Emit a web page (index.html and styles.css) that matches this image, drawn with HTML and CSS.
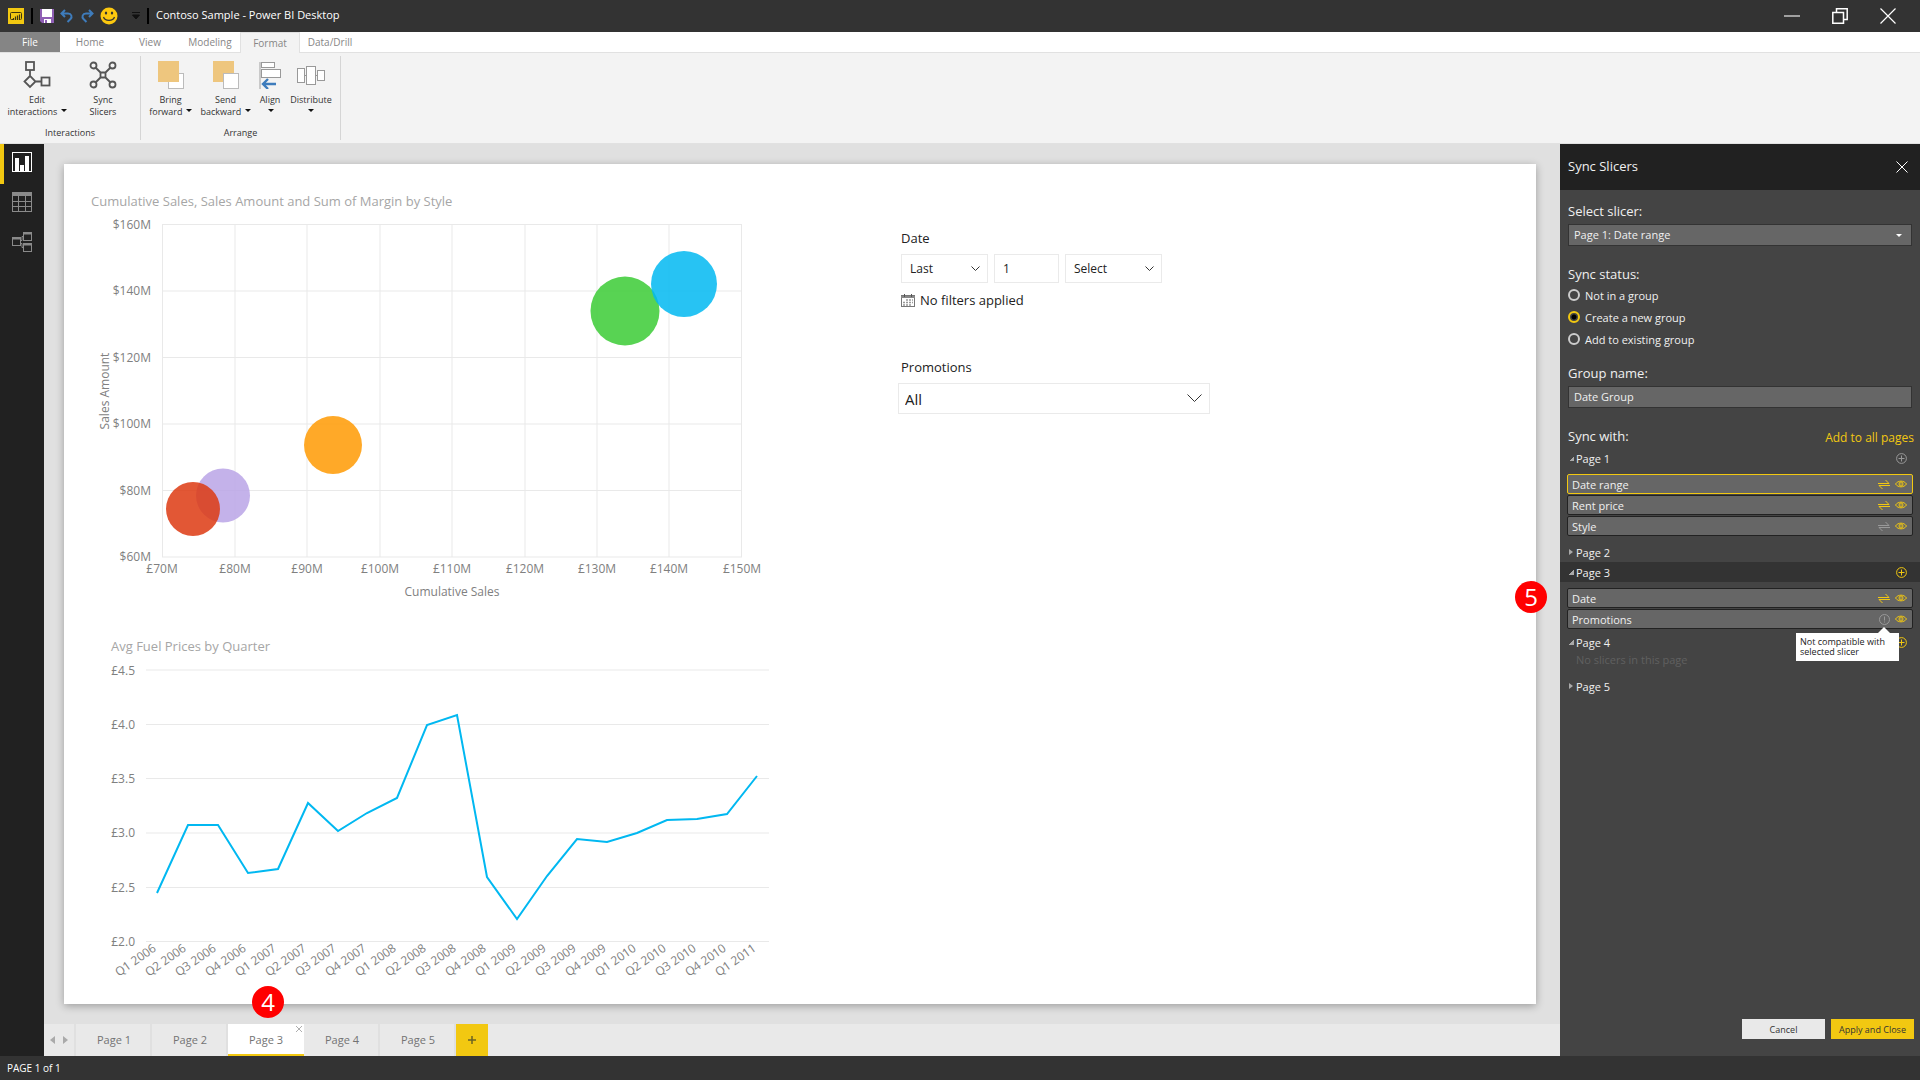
FILE: index.html
```
<!DOCTYPE html>
<html lang="en">
<head>
  <meta charset="UTF-8">
  <meta name="viewport" content="width=device-width, initial-scale=1.0">
  <title>Contoso Sample - Power BI Desktop</title>
  <link rel="stylesheet" href="styles.css">
</head>
<body>

  <!-- Shared icons -->
  <svg class="sprite" aria-hidden="true">
    <symbol id="icon-sync" viewBox="0 0 12 11"><path d="M0 4.500H11L7.500 1M12 6.500H1L4.500 10" fill="none" stroke="currentColor" stroke-width="1"/></symbol>
    <symbol id="icon-eye" viewBox="0 0 12 8"><path d="M0.5 4C3 0.2 9 0.2 11.5 4C9 7.8 3 7.8 0.5 4Z" fill="none" stroke="currentColor" stroke-width="1"/><circle cx="6" cy="4" r="2" fill="none" stroke="currentColor" stroke-width="1"/><circle cx="6" cy="4" r="0.7" fill="currentColor"/></symbol>
    <symbol id="icon-add" viewBox="0 0 11 11"><path d="M5.5 2.5V8.500M2.500 5.500H8.500" stroke="currentColor"/><circle cx="5.500" cy="5.500" r="4.900" fill="none" stroke="currentColor"/></symbol>
    <symbol id="icon-warn" viewBox="0 0 11 11"><path d="M5.500 2.500V6.500M5.500 7.500V8.500" stroke="currentColor"/><circle cx="5.500" cy="5.500" r="5" fill="none" stroke="currentColor"/></symbol>
  </svg>

  <!-- Title bar -->
  <header class="titlebar">
    <svg class="app-logo" width="16" height="16" viewBox="0 0 16 16"><rect width="16" height="16" fill="#f2c811"/><path d="M5 11.500H3.500Q2.500 11.500 2.500 10.500V5.500Q2.500 4.500 3.500 4.500H12.500Q13.500 4.500 13.500 5.500V10.500Q13.500 11.500 12.500 11.500" fill="none" stroke="#3d3510"/><path d="M5.500 12V10M7.500 12V8.500M9.500 12V7.500M11.500 12V6.500" stroke="#3d3510" stroke-width="1.200"/></svg>
    <span class="bar"></span>
    <button class="quick" aria-label="Save"><svg width="14" height="14" viewBox="0 0 14 14"><path d="M0 0H14V14H2L0 12Z" fill="#8f5fb5"/><rect x="2" width="10" height="8" fill="#fff"/><rect x="4" y="10" width="7" height="4" fill="#fff"/><rect x="5" y="11" width="2" height="3" fill="#8f5fb5"/></svg></button>
    <button class="quick" aria-label="Undo"><svg width="14" height="14" viewBox="0 0 14 14"><path d="M5 1L1.500 4.500L5 8M1.500 4.500H8C11.500 4.500 12.500 8 10.500 10L7.500 13" fill="none" stroke="#3e7cbc" stroke-width="2"/></svg></button>
    <button class="quick" aria-label="Redo"><svg width="14" height="14" viewBox="0 0 14 14"><path d="M9 1L12.500 4.500L9 8M12.500 4.500H6C2.500 4.500 1.500 8 3.500 10L6.500 13" fill="none" stroke="#3e7cbc" stroke-width="2"/></svg></button>
    <button class="quick" aria-label="Send a smile"><svg width="18" height="18" viewBox="0 0 18 18"><circle cx="9" cy="9" r="8.500" fill="#fcc80f"/><ellipse cx="6" cy="6" rx="1.200" ry="1.600" fill="#333"/><ellipse cx="12" cy="6" rx="1.200" ry="1.600" fill="#333"/><path d="M3.500 10C5 14.500 13 14.500 14.500 10" fill="none" stroke="#333" stroke-width="1.200"/></svg></button>
    <button class="quick more" aria-label="Customize toolbar"><svg width="8" height="8" viewBox="0 0 8 8"><path d="M0 0.500H8M0.500 3H7.500L4 7Z" stroke="#111" fill="#111"/></svg></button>
    <span class="bar"></span>
    <span class="window-title">Contoso Sample - Power BI Desktop</span>
    <div class="window-controls">
      <button aria-label="Minimize"><svg width="16" height="16" viewBox="0 0 16 16"><path d="M0 8H16" stroke="#a0a0a0" stroke-width="2"/></svg></button>
      <button aria-label="Restore"><svg width="16" height="16" viewBox="0 0 16 16"><path d="M0.800 4.500H11.500V15.200H0.800ZM4.500 4V0.800H15.200V11.500H12" fill="none" stroke="#fff" stroke-width="1.500"/></svg></button>
      <button aria-label="Close window"><svg width="16" height="16" viewBox="0 0 16 16"><path d="M0.500 0.500L15.500 15.500M15.500 0.500L0.500 15.500" stroke="#fff" stroke-width="1.200"/></svg></button>
    </div>
  </header>

  <!-- Ribbon -->
  <nav class="ribbon-tabs">
    <button class="file">File</button>
    <button>Home</button>
    <button>View</button>
    <button>Modeling</button>
    <button class="active">Format</button>
    <button>Data/Drill</button>
  </nav>
  <div class="ribbon">
    <section class="ribbon-group interactions">
      <div class="tools">
        <button class="tool">
          <svg width="28" height="28" viewBox="0 0 28 28" fill="none" stroke="#555" stroke-width="1.800"><rect x="3" y="1" width="8" height="8"/><path d="M7 9V15L12.500 20.500L7 26L1.500 20.500L7 15M12.500 20.500H19"/><rect x="18.500" y="16.500" width="8" height="8"/></svg>
          <span>Edit<br>interactions <i class="caret"></i></span>
        </button>
        <button class="tool">
          <svg width="28" height="28" viewBox="0 0 28 28" fill="none" stroke="#555" stroke-width="1.800"><circle cx="4.500" cy="4.500" r="3"/><circle cx="23.500" cy="4.500" r="3"/><circle cx="4.500" cy="23.500" r="3"/><circle cx="23.500" cy="23.500" r="3"/><rect x="11.500" y="11.500" width="5" height="5" rx="1"/><path d="M6.500 6.500L11.500 11.500M21.500 6.500L16.500 11.500M6.500 21.500L11.500 16.500M21.500 21.500L16.500 16.500"/></svg>
          <span>Sync<br>Slicers</span>
        </button>
      </div>
      <h2>Interactions</h2>
    </section>
    <section class="ribbon-group arrange">
      <div class="tools">
        <button class="tool">
          <svg width="28" height="28" viewBox="0 0 28 28"><rect x="11.500" y="12.500" width="15" height="15" fill="#fff" stroke="#bbb"/><rect x="1" width="21" height="21" fill="#eec67e"/></svg>
          <span>Bring<br>forward <i class="caret"></i></span>
        </button>
        <button class="tool">
          <svg width="28" height="28" viewBox="0 0 28 28"><rect x="1" width="21" height="21" fill="#eec67e"/><rect x="11.500" y="12.500" width="15" height="15" fill="#fff" stroke="#bbb"/></svg>
          <span>Send<br>backward <i class="caret"></i></span>
        </button>
        <button class="tool narrow">
          <svg width="28" height="28" viewBox="0 0 28 28"><path d="M4 1V28" stroke="#bbb" stroke-width="1.500"/><g fill="#fff" stroke="#999"><rect x="5.500" y="1.500" width="13" height="5"/><rect x="5.500" y="8.500" width="19" height="8"/></g><path d="M20 23H7M12 18L7 23L12 28" fill="none" stroke="#3e7cbc" stroke-width="2.400"/></svg>
          <span>Align<br><i class="caret"></i></span>
        </button>
        <button class="tool medium">
          <svg width="28" height="28" viewBox="0 0 28 28" fill="#fff" stroke="#999"><path d="M7 14.500H10M18 14.500H21"/><rect x="0.500" y="7.500" width="7" height="14"/><rect x="9.500" y="5.500" width="9" height="18"/><rect x="20.500" y="9.500" width="7" height="10"/></svg>
          <span>Distribute<br><i class="caret"></i></span>
        </button>
      </div>
      <h2>Arrange</h2>
    </section>
  </div>

  <main class="workspace">
    <!-- View switcher -->
    <nav class="rail">
      <button class="active" aria-label="Report view"><svg width="20" height="20" viewBox="0 0 20 20"><rect x="0.500" y="0.500" width="19" height="19" fill="none" stroke="#fff"/><path d="M3 20V6H7V20ZM8 20V13H12V20ZM13 20V4H17V20Z" fill="#fff"/></svg></button>
      <button aria-label="Data view"><svg width="20" height="20" viewBox="0 0 20 20" fill="none" stroke="#8a8a8a"><rect x="0.500" y="0.500" width="19" height="19"/><path d="M0 2H20" stroke-width="4"/><path d="M0 9.500H20M0 14.500H20M6.500 4V20M13.500 4V20"/></svg></button>
      <button aria-label="Model view"><svg width="20" height="20" viewBox="0 0 20 20" fill="none" stroke="#8a8a8a"><rect x="0.500" y="5.500" width="8" height="8"/><rect x="11.500" y="0.500" width="8" height="8"/><rect x="11.500" y="11.500" width="8" height="8"/><path d="M0 6.500H9M11 1.500H20M11 12.500H20" stroke-width="2"/><path d="M9 8.500H10V4.500H11M9 11.500H10V15.500H11"/></svg></button>
    </nav>

    <div class="report">
      <div class="canvas">
        <div class="sheet">
          <div class="charts">
            <section class="chart">
              <h3>Cumulative Sales, Sales Amount and Sum of Margin by Style</h3>
              <svg width="680" height="400" viewBox="0 0 680 400">
                <path class="grid" d="M71.500 12V345M144 12V345M216 12V345M289 12V345M361 12V345M434 12V345M506 12V345M578 12V345M650.500 12V345M71 12.500H651M71 79H651M71 145.500H651M71 212H651M71 278.500H651M71 345H651"/>
                <g class="axis end">
                  <text x="60" y="17">$160M</text>
                  <text x="60" y="83">$140M</text>
                  <text x="60" y="150">$120M</text>
                  <text x="60" y="216">$100M</text>
                  <text x="60" y="283">$80M</text>
                  <text x="60" y="349">$60M</text>
                </g>
                <g class="axis middle">
                  <text x="71" y="361">£70M</text>
                  <text x="144" y="361">£80M</text>
                  <text x="216" y="361">£90M</text>
                  <text x="289" y="361">£100M</text>
                  <text x="361" y="361">£110M</text>
                  <text x="434" y="361">£120M</text>
                  <text x="506" y="361">£130M</text>
                  <text x="578" y="361">£140M</text>
                  <text x="651" y="361">£150M</text>
                  <text x="361" y="384">Cumulative Sales</text>
                  <text transform="translate(18 179) rotate(-90)">Sales Amount</text>
                </g>
                <g class="bubbles">
                  <circle cx="534" cy="99" r="34.500" fill="#3bcb35"/>
                  <circle cx="593" cy="72" r="33" fill="#01b8f1"/>
                  <circle cx="242" cy="233" r="29" fill="#ff9a02"/>
                  <circle cx="132" cy="283.500" r="27" fill="#baa5e6"/>
                  <circle cx="102" cy="297" r="27" fill="#dd3a12"/>
                </g>
              </svg>
            </section>
            <section class="chart fuel">
              <h3>Avg Fuel Prices by Quarter</h3>
              <svg width="680" height="315" viewBox="0 0 680 315">
                <path class="grid" d="M35 10H658M35 64.500H658M35 118.500H658M35 173H658M35 227.500H658M35 281.500H658"/>
                <g class="axis end">
                  <text x="24" y="15">£4.5</text>
                  <text x="24" y="69">£4.0</text>
                  <text x="24" y="123">£3.5</text>
                  <text x="24" y="177">£3.0</text>
                  <text x="24" y="232">£2.5</text>
                  <text x="24" y="286">£2.0</text>
                </g>
                <polyline class="line" points="46,233 77,165 107,165 137,213 167,209 197,143 227,171 256,153 286,138 316,65 346,55 376,217 406,259 436,216 466,179 496,182 526,173 556,160 586,159 616,154 646,116"/>
                <g class="axis end">
                  <text transform="translate(46 290) rotate(-35)">Q1 2006</text>
                  <text transform="translate(76 290) rotate(-35)">Q2 2006</text>
                  <text transform="translate(106 290) rotate(-35)">Q3 2006</text>
                  <text transform="translate(136 290) rotate(-35)">Q4 2006</text>
                  <text transform="translate(166 290) rotate(-35)">Q1 2007</text>
                  <text transform="translate(196 290) rotate(-35)">Q2 2007</text>
                  <text transform="translate(226 290) rotate(-35)">Q3 2007</text>
                  <text transform="translate(256 290) rotate(-35)">Q4 2007</text>
                  <text transform="translate(286 290) rotate(-35)">Q1 2008</text>
                  <text transform="translate(316 290) rotate(-35)">Q2 2008</text>
                  <text transform="translate(346 290) rotate(-35)">Q3 2008</text>
                  <text transform="translate(376 290) rotate(-35)">Q4 2008</text>
                  <text transform="translate(406 290) rotate(-35)">Q1 2009</text>
                  <text transform="translate(436 290) rotate(-35)">Q2 2009</text>
                  <text transform="translate(466 290) rotate(-35)">Q3 2009</text>
                  <text transform="translate(496 290) rotate(-35)">Q4 2009</text>
                  <text transform="translate(526 290) rotate(-35)">Q1 2010</text>
                  <text transform="translate(556 290) rotate(-35)">Q2 2010</text>
                  <text transform="translate(586 290) rotate(-35)">Q3 2010</text>
                  <text transform="translate(616 290) rotate(-35)">Q4 2010</text>
                  <text transform="translate(646 290) rotate(-35)">Q1 2011</text>
                </g>
              </svg>
            </section>
          </div>

          <div class="slicers">
            <section class="slicer">
              <h3>Date</h3>
              <div class="date-row">
                <select class="period" aria-label="Date direction"><option>Last</option><option>Next</option></select>
                <input type="text" class="count" value="1" aria-label="Count">
                <select class="unit" aria-label="Date unit"><option>Select</option><option>Days</option></select>
              </div>
              <p class="applied">
                <svg width="14" height="13" viewBox="0 0 14 13"><rect x="0.500" y="1.500" width="13" height="11" fill="#fff" stroke="#777"/><path d="M0 3H14" stroke="#888" stroke-width="2"/><path d="M3.500 0V3M10.500 0V3" stroke="#555"/><path d="M5 6H12M2 8.500H12M2 11H10" stroke="#999" stroke-width="1.500" stroke-dasharray="2 1"/></svg>
                No filters applied
              </p>
            </section>
            <section class="slicer">
              <h3><label for="promotions">Promotions</label></h3>
              <select id="promotions" class="promotions"><option>All</option></select>
            </section>
          </div>
          <span class="callout step-five">5</span>
        </div>
      </div>

      <!-- Page tabs -->
      <nav class="page-tabs">
        <div class="pager">
          <button aria-label="Previous page"><svg width="5" height="8" viewBox="0 0 5 8"><path d="M5 0V8L0 4Z" fill="#aaa"/></svg></button>
          <button aria-label="Next page"><svg width="5" height="8" viewBox="0 0 5 8"><path d="M0 0V8L5 4Z" fill="#aaa"/></svg></button>
        </div>
        <button class="page-tab">Page 1</button>
        <button class="page-tab">Page 2</button>
        <div class="page-tab active">
          <button>Page 3</button>
          <button class="tab-close" aria-label="Delete page"><svg width="6" height="6" viewBox="0 0 6 6"><path d="M0 0L6 6M6 0L0 6" stroke="#999" stroke-width="0.800"/></svg></button>
          <span class="callout step-four">4</span>
        </div>
        <button class="page-tab">Page 4</button>
        <button class="page-tab">Page 5</button>
        <button class="add-page" aria-label="New page"><svg width="8" height="8" viewBox="0 0 8 8"><path d="M0 4H8M4 0V8" stroke="#6b6325" stroke-width="1.500"/></svg></button>
      </nav>
    </div>

    <!-- Sync slicers pane -->
    <aside class="pane">
      <header class="pane-header">
        <h2>Sync Slicers</h2>
        <button aria-label="Close pane"><svg width="12" height="12" viewBox="0 0 12 12"><path d="M0.500 0.500L11.500 11.500M11.500 0.500L0.500 11.500" stroke="#fff"/></svg></button>
      </header>
      <div class="pane-body">
        <div class="field">
          <label class="field-label" for="slicer">Select slicer:</label>
          <select id="slicer"><option>Page 1: Date range</option></select>
        </div>
        <fieldset class="field status">
          <legend class="field-label">Sync status:</legend>
          <label><input type="radio" name="status">Not in a group</label>
          <label><input type="radio" name="status" checked>Create a new group</label>
          <label><input type="radio" name="status">Add to existing group</label>
        </fieldset>
        <div class="field">
          <label class="field-label" for="group">Group name:</label>
          <input type="text" id="group" value="Date Group">
        </div>
        <div class="sync-head">
          <h3 class="field-label">Sync with:</h3>
          <a href="#">Add to all pages</a>
        </div>
      </div>

      <div class="tree">
        <div class="node"><i class="arrow open"></i>Page 1<button class="add off" aria-label="Add to page 1"><svg width="11" height="11"><use href="#icon-add"/></svg></button></div>
        <ul>
          <li class="selected">Date range<svg class="sync" width="12" height="11"><use href="#icon-sync"/></svg><svg width="12" height="8"><use href="#icon-eye"/></svg></li>
          <li>Rent price<svg class="sync" width="12" height="11"><use href="#icon-sync"/></svg><svg width="12" height="8"><use href="#icon-eye"/></svg></li>
          <li>Style<svg class="sync off" width="12" height="11"><use href="#icon-sync"/></svg><svg width="12" height="8"><use href="#icon-eye"/></svg></li>
        </ul>
        <div class="node"><i class="arrow"></i>Page 2</div>
        <div class="node current"><i class="arrow open"></i>Page 3<button class="add" aria-label="Add to page 3"><svg width="11" height="11"><use href="#icon-add"/></svg></button></div>
        <ul class="short">
          <li>Date<svg class="sync" width="12" height="11"><use href="#icon-sync"/></svg><svg width="12" height="8"><use href="#icon-eye"/></svg></li>
          <li>Promotions<span class="warn"><svg class="off" width="11" height="11"><use href="#icon-warn"/></svg><span class="tooltip" role="tooltip">Not compatible with<br>selected slicer</span></span><svg width="12" height="8"><use href="#icon-eye"/></svg></li>
        </ul>
        <div class="node"><i class="arrow open"></i>Page 4<button class="add" aria-label="Add to page 4"><svg width="11" height="11"><use href="#icon-add"/></svg></button></div>
        <p class="empty">No slicers in this page</p>
        <div class="node"><i class="arrow"></i>Page 5</div>
      </div>

      <footer class="pane-footer">
        <button>Cancel</button>
        <button class="primary">Apply and Close</button>
      </footer>
    </aside>
  </main>

  <footer class="statusbar">PAGE 1 of 1</footer>

</body>
</html>
```
FILE: styles.css
```
* {
  box-sizing: border-box;
}

body {
  margin: 0;
  min-height: 100vh;
  display: flex;
  flex-direction: column;
  background: #e0e0e0;
  color: #333;
  font-family: "Open Sans", "Noto Sans", sans-serif;
  font-size: 11px;
}

h2, h3, p, ul, fieldset {
  margin: 0;
  padding: 0;
  border: 0;
  font-weight: normal;
}

button, input, select {
  margin: 0;
  padding: 0;
  border: 0;
  border-radius: 0;
  background: none;
  color: inherit;
  font: inherit;
}

svg {
  display: block;
  flex: none;
}

.sprite {
  display: none;
}

/* Title bar */
.titlebar {
  display: flex;
  align-items: center;
  height: 32px;
  padding-left: 8px;
  background: #333;
  color: #fff;
}
.bar {
  width: 2px;
  height: 16px;
  margin: 0 7px;
  background: #000;
}
.quick {
  margin-right: 6px;
}
.quick.more {
  margin: 0 0 0 8px;
}
.window-title {
  line-height: 30px;
  height: 32px;
}
.window-controls {
  display: flex;
  margin-left: auto;
  padding-right: 8px;
}
.window-controls button {
  width: 48px;
  height: 32px;
  display: flex;
  align-items: center;
  justify-content: center;
}

/* Ribbon */
.ribbon-tabs {
  display: flex;
  height: 21px;
  background: #fff;
  border-bottom: 1px solid #e1e1e1;
}
.ribbon-tabs button {
  width: 60px;
  height: 20px;
  color: #868686;
  font-size: 10px;
}
.ribbon-tabs .file {
  background: #858585;
  color: #fff;
}
.ribbon-tabs .active {
  height: 21px;
  background: #f3f3f3;
  border: 1px solid #e1e1e1;
  border-bottom: 0;
}
.ribbon {
  display: flex;
  height: 91px;
  padding: 3px 0;
  background: #f3f3f3;
  border-bottom: 1px solid #e1e1e1;
}
.ribbon-group {
  display: flex;
  flex-direction: column;
  justify-content: space-between;
  border-right: 1px solid #d5d5d5;
}
.ribbon-group h2 {
  font-size: 9px;
  line-height: 14px;
  text-align: center;
}
.tools {
  display: flex;
  padding-top: 5px;
}
.interactions .tools {
  gap: 4px;
  padding: 5px 6px 0;
}
.arrange .tools {
  padding: 5px 5px 0 2px;
}
.tool {
  min-width: 55px;
  display: flex;
  flex-direction: column;
  align-items: center;
  gap: 5px;
  font-size: 9px;
  line-height: 12px;
  white-space: nowrap;
}
.interactions .tool {
  min-width: 62px;
}
.tool.narrow {
  min-width: 34px;
}
.tool.medium {
  min-width: 48px;
}
.caret {
  display: inline-block;
  border: 3px solid transparent;
  border-top-color: #111;
  border-bottom: 0;
  margin-left: 1px;
  vertical-align: 3px;
}

/* Workspace */
.workspace {
  flex: 1;
  display: flex;
}
.rail {
  width: 44px;
  background: #212121;
}
.rail button {
  width: 44px;
  height: 40px;
  padding: 0 0 4px 12px;
  display: flex;
  align-items: center;
}
.rail .active {
  padding-left: 8px;
  border-left: 4px solid #f2c811;
}
.report {
  flex: 1;
  min-width: 0;
  display: flex;
  flex-direction: column;
}
.canvas {
  flex: 1;
  display: flex;
  padding: 20px 24px 20px 20px;
}
.sheet {
  position: relative;
  flex: 1;
  display: flex;
  gap: 110px;
  padding: 27px;
  background: #fff;
  box-shadow: 0 2px 8px rgba(0, 0, 0, 0.3);
}

/* Charts */
.chart h3 {
  padding-bottom: 1px;
  color: #a6a6a6;
  font-size: 13px;
  line-height: 20px;
}
.chart.fuel {
  padding: 24px 0 0 20px;
}
.fuel h3 {
  padding-bottom: 4px;
}
.grid {
  fill: none;
  stroke: #e9e9e9;
}
.axis {
  fill: #808080;
  font-size: 12px;
}
.end {
  text-anchor: end;
}
.middle {
  text-anchor: middle;
}
.bubbles {
  fill-opacity: 0.85;
}
.line {
  fill: none;
  stroke: #01b8f1;
  stroke-width: 2;
}

/* Slicers */
.slicers {
  display: flex;
  flex-direction: column;
  gap: 46px;
  padding-top: 37px;
  color: #222;
}
.slicer h3 {
  font-size: 13px;
  line-height: 20px;
}
.slicer select,
.slicer input {
  height: 29px;
  padding: 0 8px;
  border: 1px solid #eaeaea;
  background: #fff;
  font-size: 12px;
}
.slicer select {
  appearance: none;
  background: #fff url("data:image/svg+xml,%3Csvg xmlns='http://www.w3.org/2000/svg' width='9' height='6'%3E%3Cpath d='M.5 .5L4.5 4.500L8.500 .5' fill='none' stroke='%23333'/%3E%3C/svg%3E") no-repeat right 7px center;
}
.date-row {
  display: flex;
  gap: 6px;
  padding: 6px 0;
}
.period {
  width: 87px;
}
.count {
  width: 65px;
}
.unit {
  width: 97px;
}
.applied {
  display: flex;
  align-items: center;
  gap: 5px;
  font-size: 13px;
  line-height: 22px;
}
.slicer .promotions {
  width: 312px;
  height: 31px;
  margin: 6px 0 0 -3px;
  padding: 0 6px;
  background-image: url("data:image/svg+xml,%3Csvg xmlns='http://www.w3.org/2000/svg' width='15' height='9'%3E%3Cpath d='M.5 .5L7.500 7.500L14.500 .5' fill='none' stroke='%23333'/%3E%3C/svg%3E");
  font-size: 15px;
}

/* Numbered callouts */
.callout {
  position: absolute;
  width: 32px;
  height: 32px;
  border-radius: 50%;
  background: #f00;
  color: #fff;
  font-size: 24px;
  line-height: 32px;
  text-align: center;
}
.step-five {
  top: 417px;
  right: -11px;
}
.step-four {
  left: 24px;
  bottom: 36px;
}

/* Page tabs */
.page-tabs {
  display: flex;
  height: 32px;
  background: #e9e9e9;
  color: #737373;
}
.pager {
  width: 32px;
  display: flex;
  align-items: center;
  justify-content: center;
  gap: 8px;
  border-right: 2px solid #e0e0e0;
}
.page-tab {
  position: relative;
  width: 76px;
  padding: 0 0 2px 2px;
  border-right: 2px solid #e0e0e0;
}
.page-tab.active {
  padding: 0;
  background: #fff;
  border-bottom: 2px solid #f2c811;
  border-right: 0;
}
.page-tab.active > button:first-child {
  width: 100%;
  height: 100%;
}
.page-tab .tab-close {
  position: absolute;
  top: 2px;
  right: 2px;
}
.add-page {
  width: 32px;
  display: flex;
  align-items: center;
  justify-content: center;
  background: #f2c811;
}

/* Sync slicers pane */
.pane {
  width: 360px;
  display: flex;
  flex-direction: column;
  background: #444;
  color: #f0f0f0;
}
.pane-header {
  display: flex;
  justify-content: space-between;
  align-items: center;
  height: 46px;
  padding: 0 12px 0 8px;
  background: #212121;
}
.pane-header h2 {
  padding-bottom: 2px;
  font-size: 13px;
}
.pane-body {
  padding: 11px 8px 0;
}
.field {
  margin-bottom: 18px;
}
.field.status {
  margin-bottom: 13px;
}
.field-label {
  display: block;
  padding: 0;
  font-size: 13px;
  line-height: 20px;
}
.pane-body select,
.pane-body input[type="text"] {
  display: block;
  width: 100%;
  height: 22px;
  margin-top: 3px;
  padding: 0 5px 1px;
  background: #666;
  border: 1px solid #333;
  color: #f0f0f0;
  font-size: 11px;
}
.pane-body select {
  appearance: none;
  background: #666 url("data:image/svg+xml,%3Csvg xmlns='http://www.w3.org/2000/svg' width='6' height='3'%3E%3Cpath d='M0 0H6L3 3Z' fill='%23fff'/%3E%3C/svg%3E") no-repeat right 9px center;
}
.status label {
  display: flex;
  align-items: center;
  gap: 5px;
  height: 22px;
}
.status input {
  appearance: none;
  width: 12px;
  height: 12px;
  border: 2px solid #ccc;
  border-radius: 50%;
}
.status input:checked {
  border-color: #f2c811;
  background: radial-gradient(#000 2px, transparent 3px);
}
.sync-head {
  display: flex;
  justify-content: space-between;
  height: 22px;
}
.sync-head a {
  margin-right: -2px;
  color: #f2c811;
  font-size: 12px;
  line-height: 24px;
  text-decoration: none;
}
.tree {
  flex: 1;
}
.node {
  display: flex;
  align-items: center;
  height: 20px;
  padding: 0 13px 0 9px;
}
.node.current {
  background: #333;
}
.arrow {
  width: 7px;
  border: 3px solid transparent;
  border-left: 4px solid #aaa;
  border-right: 0;
}
.arrow.open {
  height: 5px;
  border: 0;
  margin-right: 2px;
  width: 5px;
  background: linear-gradient(135deg, transparent 50%, #aaa 50%);
}
.add {
  margin-left: auto;
  color: #f2c811;
}
.add.off {
  color: #999;
}
.tree ul {
  display: flex;
  flex-direction: column;
  gap: 1px;
  padding: 6px 7px;
  list-style: none;
}
.tree .short {
  padding-bottom: 3px;
}
.tree li {
  display: flex;
  align-items: center;
  gap: 5px;
  height: 20px;
  padding: 0 5px 0 4px;
  background: #666;
  border: 1px solid #222;
  border-radius: 2px;
}
.tree li.selected {
  border-color: #f2c811;
}
.tree li svg {
  color: #f2c811;
}
.tree li .off {
  color: #999;
}
.tree li .sync,
.tree li .warn {
  margin-left: auto;
}
.warn {
  position: relative;
}
.tooltip {
  position: absolute;
  top: 19px;
  right: -9px;
  width: 103px;
  padding: 4px;
  background: #fff;
  color: #222;
  font-size: 9px;
  line-height: 10px;
  white-space: nowrap;
  z-index: 1;
}
.tooltip::before {
  content: "";
  position: absolute;
  top: -6px;
  right: 9px;
  border: 6px solid transparent;
  border-top: 0;
  border-bottom-color: #fff;
}
.empty {
  padding: 0 0 8px 16px;
  color: #606060;
  line-height: 16px;
}
.pane-footer {
  display: flex;
  justify-content: flex-end;
  gap: 6px;
  padding: 0 6px 17px;
}
.pane-footer button {
  width: 83px;
  height: 20px;
  background: #e9e9e9;
  color: #333;
  font-size: 9px;
}
.pane-footer .primary {
  background: #f2c811;
}

/* Status bar */
.statusbar {
  height: 24px;
  padding: 0 7px;
  background: #333;
  color: #fff;
  font-size: 10px;
  line-height: 24px;
}
```
